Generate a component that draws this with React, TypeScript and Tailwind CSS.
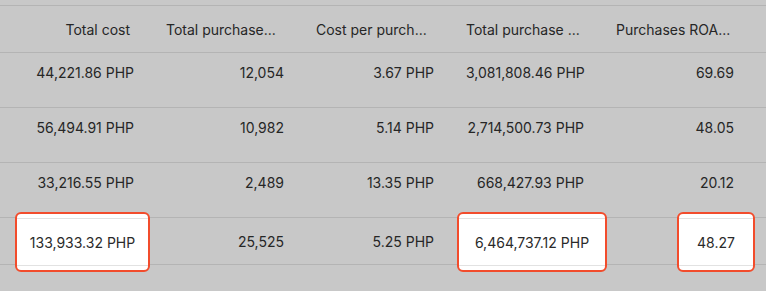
const headers = [
  { label: 'Total cost', cut: false },
  { label: 'Total purchase...', cut: true },
  { label: 'Cost per purch...', cut: true },
  { label: 'Total purchase ...', cut: true },
  { label: 'Purchases ROA...', cut: true },
]

const rows = [
  ['44,221.86 PHP', '12,054', '3.67 PHP', '3,081,808.46 PHP', '69.69'],
  ['56,494.91 PHP', '10,982', '5.14 PHP', '2,714,500.73 PHP', '48.05'],
  ['33,216.55 PHP', '2,489', '13.35 PHP', '668,427.93 PHP', '20.12'],
]

const totals = ['133,933.32 PHP', '25,525', '5.25 PHP', '6,464,737.12 PHP', '48.27']

// highlight frame around some total cells, offsets inside the cell
const spots: Record<number, string> = {
  0: 'left-[15px] right-0',
  3: 'left-[7px] -right-[7px]',
  4: 'left-[77px] -right-[5px]',
}

function Spot({ value, pos }: { value: string; pos: string }) {
  return (
    <div
      className={`absolute -top-[6px] h-[60px] overflow-hidden rounded-[6px] border-2 border-[#f24c2c] bg-white ${pos}`}
    >
      <div className="absolute inset-x-0 top-[4px] h-px bg-[#e2e2e2]" />
      <div className="absolute inset-x-0 top-[51px] h-px bg-[#e2e2e2]" />
      <div className="flex h-full items-center justify-center text-[#2a2a2a]">{value}</div>
    </div>
  )
}

export default function App() {
  return (
    <div
      className="h-[291px] w-[766px] overflow-hidden bg-[#c8c8c8] text-[14px] text-[#262626]"
      style={{ fontFamily: 'Inter, "Noto Sans", sans-serif' }}
    >
      <div className="h-[6px] border-b border-[#b4b4b4]" />

      <div className="flex h-[47px] items-center border-b border-[#b4b4b4]">
        {headers.map((h) => (
          <div
            key={h.label}
            className={`w-[150px] shrink-0 whitespace-nowrap pl-4 pr-5 ${h.cut ? 'text-left' : 'text-right'}`}
          >
            {h.label}
          </div>
        ))}
      </div>

      {rows.map((r, ri) => (
        <div key={ri} className="flex h-[55px] items-start border-b border-[#b4b4b4] pt-[9px]">
          {r.map((v, i) => (
            <div key={i} className="w-[150px] shrink-0 whitespace-nowrap px-4 text-right">
              {v}
            </div>
          ))}
        </div>
      ))}

      <div className="flex h-[47px] items-stretch border-b border-[#b4b4b4]">
        {totals.map((v, i) => (
          <div
            key={i}
            className="relative flex w-[150px] shrink-0 items-center justify-end whitespace-nowrap px-4"
          >
            {spots[i] ? <Spot value={v} pos={spots[i]} /> : v}
          </div>
        ))}
      </div>
    </div>
  )
}
